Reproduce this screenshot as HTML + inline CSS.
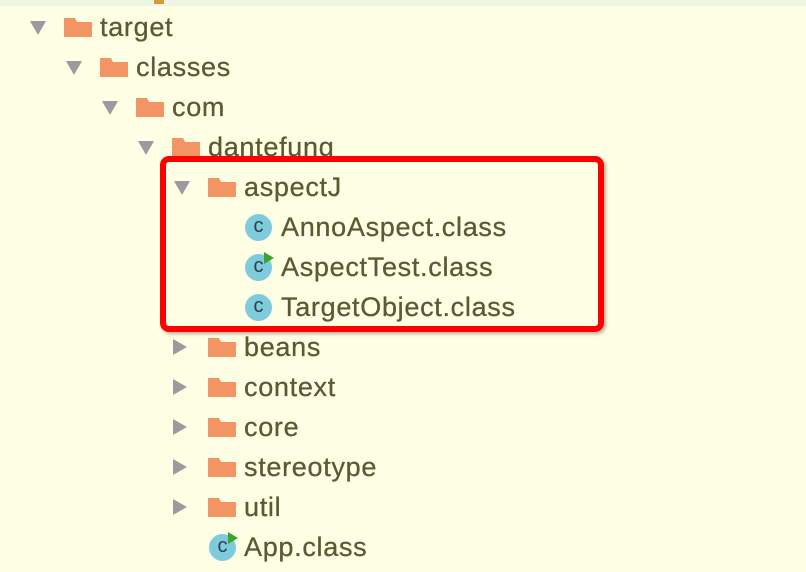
<!DOCTYPE html><html><head><style>
body{margin:0;width:806px;height:572px;background:#fefee4;position:relative;overflow:hidden;font-family:"Liberation Sans",sans-serif;}
.top{position:absolute;left:0;top:0;width:806px;height:6px;background:#edf6e2}
.r{position:absolute;height:40px;}
.t{position:absolute;font-size:27px;color:#5b5a32;letter-spacing:0.7px;line-height:40px;top:0;-webkit-text-stroke:0.3px #5b5a32}
.tri{position:absolute;width:0;height:0}
.down{border-left:8px solid transparent;border-right:8px solid transparent;border-top:14px solid #9b9b9f;top:14px}
.right{border-top:8px solid transparent;border-bottom:8px solid transparent;border-left:14px solid #9b9b9f;top:12px}
.f{position:absolute;top:11px;width:28px;height:19px}
.c{position:absolute;top:7px;width:27px;height:27px;border-radius:50%;background:#7ecbdc;color:#2d3f48;font-size:20px;text-align:center;line-height:25px}
.play{position:absolute;width:0;height:0;border-top:6px solid transparent;border-bottom:6px solid transparent;border-left:10px solid #3aa52c}
.box{position:absolute;left:160px;top:156px;width:432px;height:164px;border:6px solid #fe0000;border-radius:9px;box-shadow:2px 2px 3px rgba(0,0,0,.3)}
</style></head><body>
<div class="top"></div>
<div style="position:absolute;left:154px;top:0;width:10px;height:4px;background:#d49a3c"></div>
<svg width="0" height="0" style="position:absolute"><defs><symbol id="fd" viewBox="0 0 28 19"><path d="M0 0H11L13 4H28V19H0Z" fill="#f29463"/></symbol></defs></svg>

<div class="r" style="top:7px;left:0;width:806px">
<div class="tri down" style="left:30px"></div><svg class="f" style="left:64px"><use href="#fd"/></svg><div class="t" style="left:100px">target</div></div>
<div class="r" style="top:47px;left:0;width:806px">
<div class="tri down" style="left:66px"></div><svg class="f" style="left:100px"><use href="#fd"/></svg><div class="t" style="left:136px">classes</div></div>
<div class="r" style="top:87px;left:0;width:806px">
<div class="tri down" style="left:102px"></div><svg class="f" style="left:136px"><use href="#fd"/></svg><div class="t" style="left:172px">com</div></div>
<div class="r" style="top:127px;left:0;width:806px">
<div class="tri down" style="left:138px"></div><svg class="f" style="left:172px"><use href="#fd"/></svg><div class="t" style="left:208px">dantefung</div></div>
<div class="r" style="top:167px;left:0;width:806px">
<div class="tri down" style="left:174px"></div><svg class="f" style="left:208px"><use href="#fd"/></svg><div class="t" style="left:244px">aspectJ</div></div>
<div class="r" style="top:207px;left:0;width:806px">
<div class="c" style="left:245px">c</div><div class="t" style="left:281px">AnnoAspect.class</div></div>
<div class="r" style="top:247px;left:0;width:806px">
<div class="c" style="left:245px">c</div><div class="play" style="left:264px;top:5px"></div><div class="t" style="left:281px">AspectTest.class</div></div>
<div class="r" style="top:287px;left:0;width:806px">
<div class="c" style="left:245px">c</div><div class="t" style="left:281px">TargetObject.class</div></div>
<div class="r" style="top:327px;left:0;width:806px">
<div class="tri right" style="left:173px"></div><svg class="f" style="left:208px"><use href="#fd"/></svg><div class="t" style="left:244px">beans</div></div>
<div class="r" style="top:367px;left:0;width:806px">
<div class="tri right" style="left:173px"></div><svg class="f" style="left:208px"><use href="#fd"/></svg><div class="t" style="left:244px">context</div></div>
<div class="r" style="top:407px;left:0;width:806px">
<div class="tri right" style="left:173px"></div><svg class="f" style="left:208px"><use href="#fd"/></svg><div class="t" style="left:244px">core</div></div>
<div class="r" style="top:447px;left:0;width:806px">
<div class="tri right" style="left:173px"></div><svg class="f" style="left:208px"><use href="#fd"/></svg><div class="t" style="left:244px">stereotype</div></div>
<div class="r" style="top:487px;left:0;width:806px">
<div class="tri right" style="left:173px"></div><svg class="f" style="left:208px"><use href="#fd"/></svg><div class="t" style="left:244px">util</div></div>
<div class="r" style="top:527px;left:0;width:806px">
<div class="c" style="left:209px">c</div><div class="play" style="left:228px;top:5px"></div><div class="t" style="left:244px">App.class</div></div>
<div class="box"></div>
</body></html>
